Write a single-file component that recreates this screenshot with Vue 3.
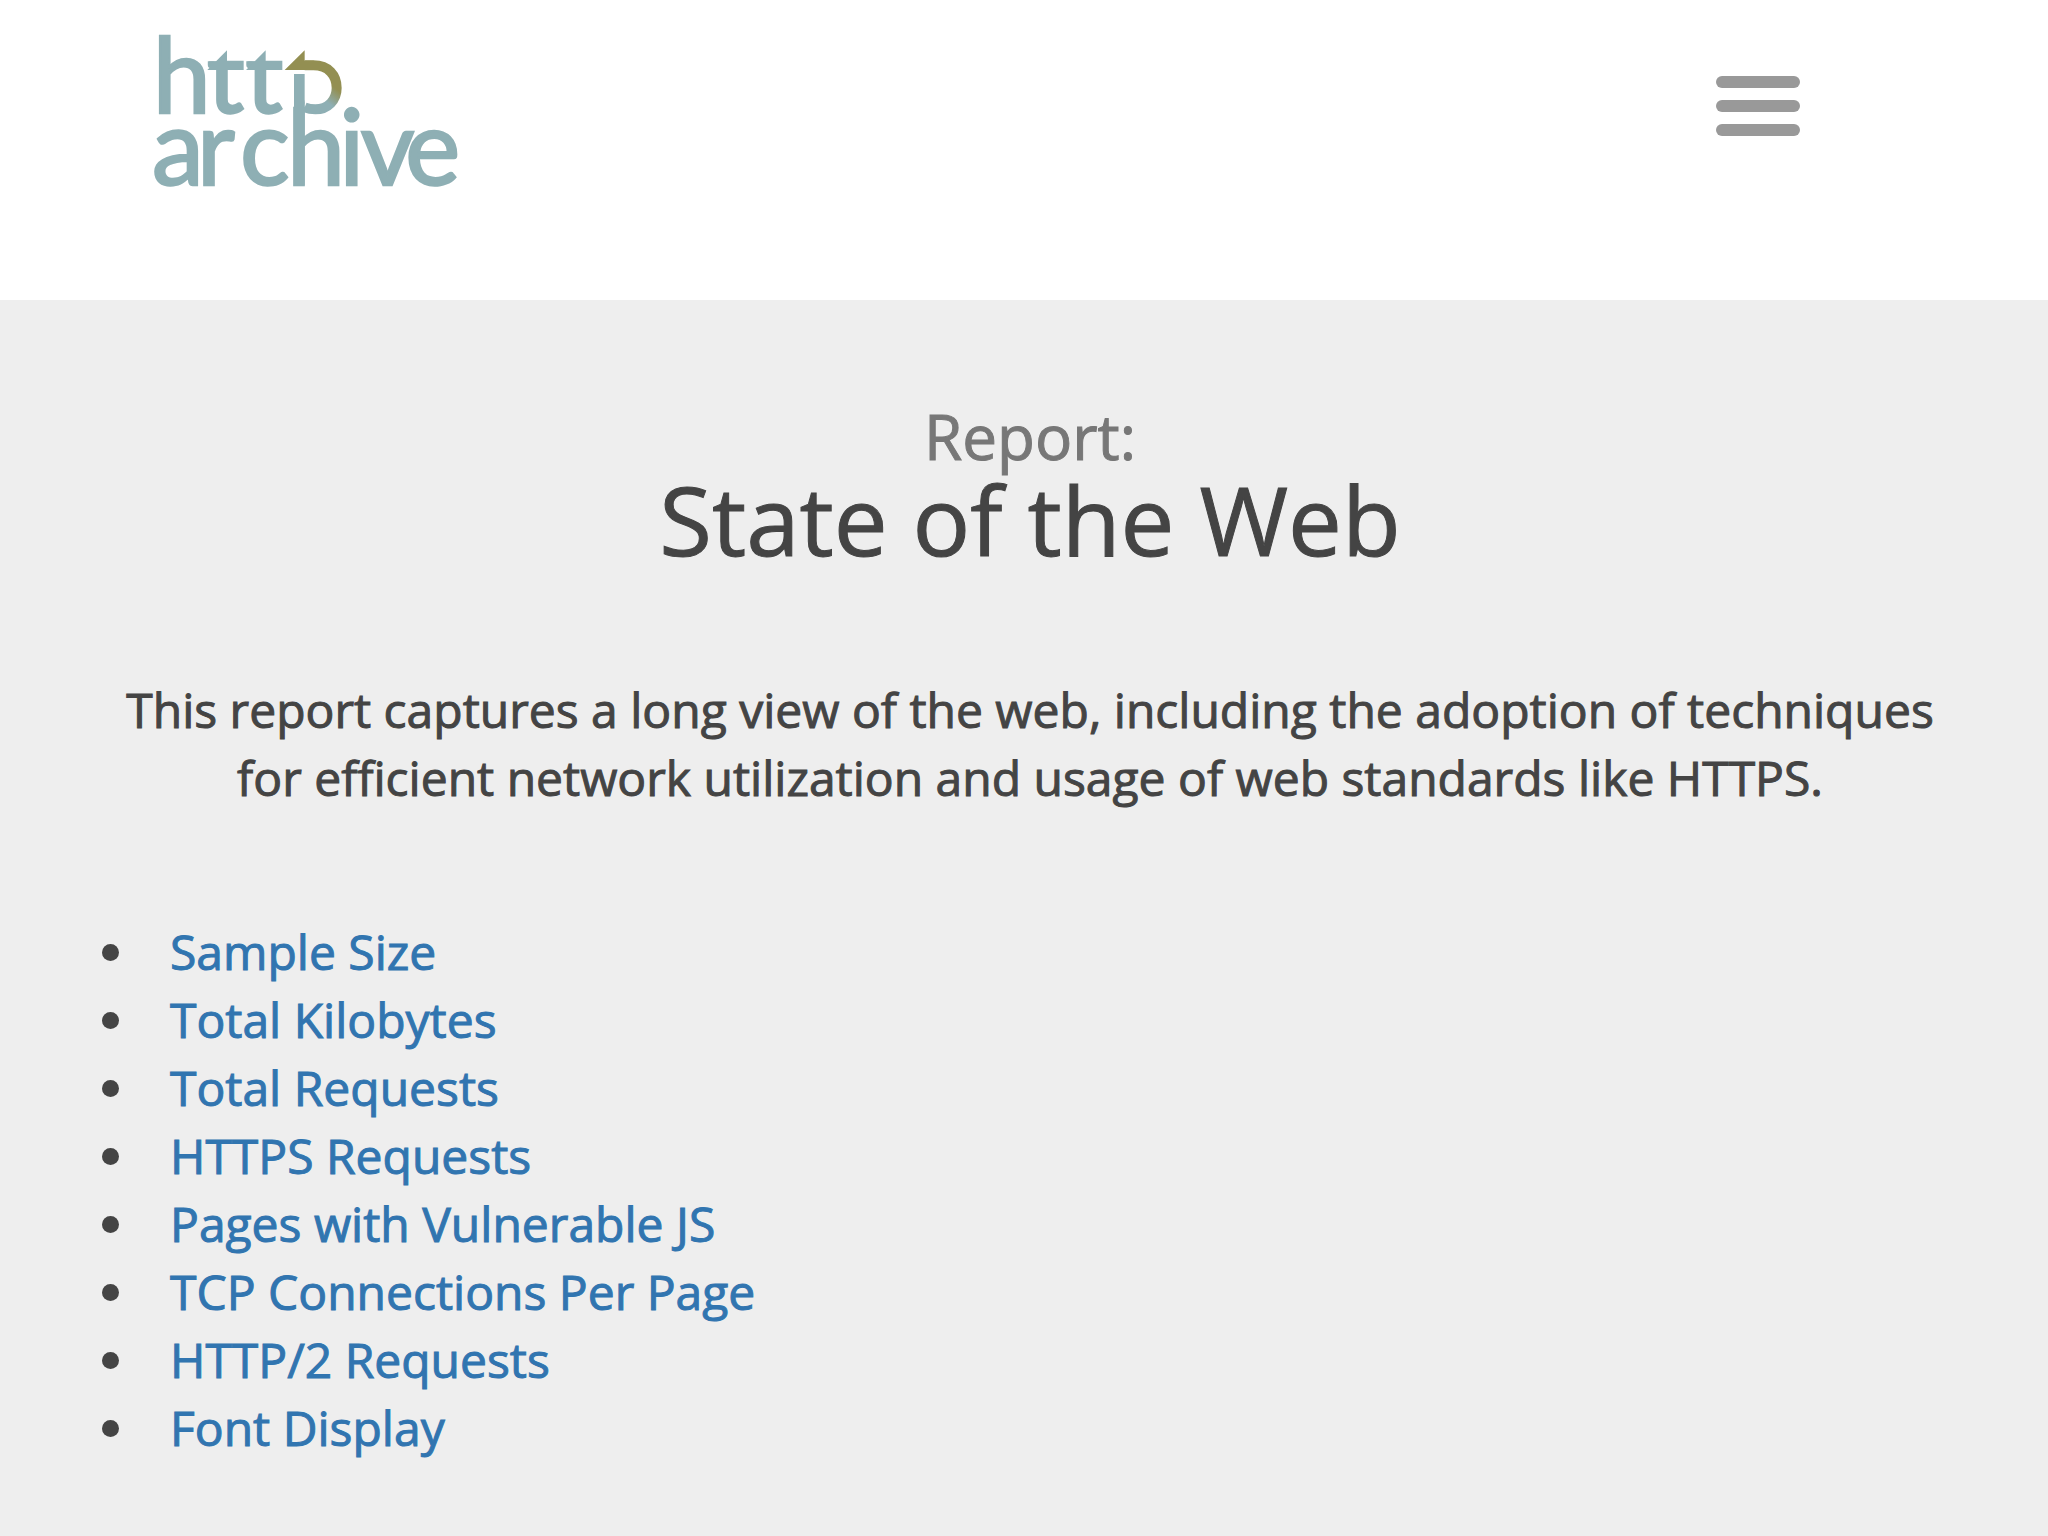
<script setup>
const metrics = [
  { id: 'numUrls', label: 'Sample Size' },
  { id: 'bytesTotal', label: 'Total Kilobytes' },
  { id: 'reqTotal', label: 'Total Requests' },
  { id: 'pctHttps', label: 'HTTPS Requests' },
  { id: 'pctVuln', label: 'Pages with Vulnerable JS' },
  { id: 'tcp', label: 'TCP Connections Per Page' },
  { id: 'h2', label: 'HTTP/2 Requests' },
  { id: 'fontDisplay', label: 'Font Display' },
]
</script>

<template>
  <div class="page">
    <header class="site-header">
      <a class="logo" href="#" aria-label="HTTP Archive">
        <svg viewBox="0 0 1020 540" width="340" height="180">
          <defs>
            <linearGradient id="bend" gradientUnits="userSpaceOnUse" x1="596" y1="212" x2="566" y2="250">
              <stop offset="0" stop-color="#938f52" />
              <stop offset="1" stop-color="#8eafb4" />
            </linearGradient>
            <!-- keeps the h whole, trims each t to its arrow bar and the p to its stem -->
            <clipPath id="trim">
              <path d="M0 0H198V300H0ZM198 124H440V300H198ZM462 162H494V400H462Z" />
            </clipPath>
          </defs>
          <g class="word">
            <text clip-path="url(#trim)" y="278" x="38 200 316 438">http</text>
            <text y="494" x="36 171 300 441 598 662 796">archive</text>
          </g>
          <path class="teal" d="M202 150L261 91V122H311V150Z" />
          <path class="teal" d="M318 150L377 91V122H427V150Z" />
          <path class="teal" d="M462 162H494V496H462Z" />
          <path class="bend" d="M494 136H520C566 136 590 166 590 204C590 240 564 268 526 268C514 268 504 266 494 262" />
          <path class="olive" d="M434 150L494 91V122H522V150Z" />
        </svg>
      </a>
      <button class="menu" type="button" aria-label="Menu">
        <span></span>
        <span></span>
        <span></span>
      </button>
    </header>

    <main class="report">
      <h1>
        <small>Report:</small>
        State of the Web
      </h1>
      <p class="summary">
        This report captures a long view of the web, including the adoption of techniques for
        efficient network utilization and usage of web standards like HTTPS.
      </p>
      <ul class="metrics">
        <li v-for="metric in metrics" :key="metric.id">
          <a :href="'#' + metric.id">{{ metric.label }}</a>
        </li>
      </ul>
    </main>
  </div>
</template>

<style>
body {
  margin: 0;
  background: #eee;
}
</style>

<style scoped>
.page {
  min-height: 100vh;
  color: #444;
  background: #eee;
  font: 48px/68px "Open Sans", sans-serif;
}
.site-header {
  display: flex;
  justify-content: space-between;
  align-items: flex-start;
  box-sizing: border-box;
  height: 300px;
  padding: 20px 248px 0 140px;
  background: #fff;
}
.logo svg {
  display: block;
  overflow: visible;
}
.word {
  font: 312px Lato, sans-serif;
  fill: #8eafb4;
  stroke: #8eafb4;
  stroke-width: 7;
}
.teal {
  fill: #8eafb4;
}
.olive {
  fill: #938f52;
}
.bend {
  fill: none;
  stroke: url(#bend);
  stroke-width: 30;
}
.menu {
  display: flex;
  flex-direction: column;
  gap: 12px;
  width: 84px;
  margin: 56px 0 0;
  padding: 0;
  border: 0;
  background: none;
  cursor: pointer;
}
.menu span {
  height: 12px;
  border-radius: 6px;
  background: #999;
}
.report {
  padding: 104px 78px 80px 90px;
  -webkit-text-stroke: 1px;
}
h1 {
  margin: 0;
  font-size: 96px;
  font-weight: 400;
  line-height: 102px;
  text-align: center;
}
h1 small {
  display: block;
  color: #777;
  font-size: 62px;
  line-height: 64px;
}
.summary {
  margin: 106px 0;
  text-align: center;
}
.metrics {
  margin: 0;
  padding-left: 53px;
}
.metrics li {
  padding-left: 27px;
}
.metrics a {
  color: #3175b0;
  text-decoration: none;
}
</style>
